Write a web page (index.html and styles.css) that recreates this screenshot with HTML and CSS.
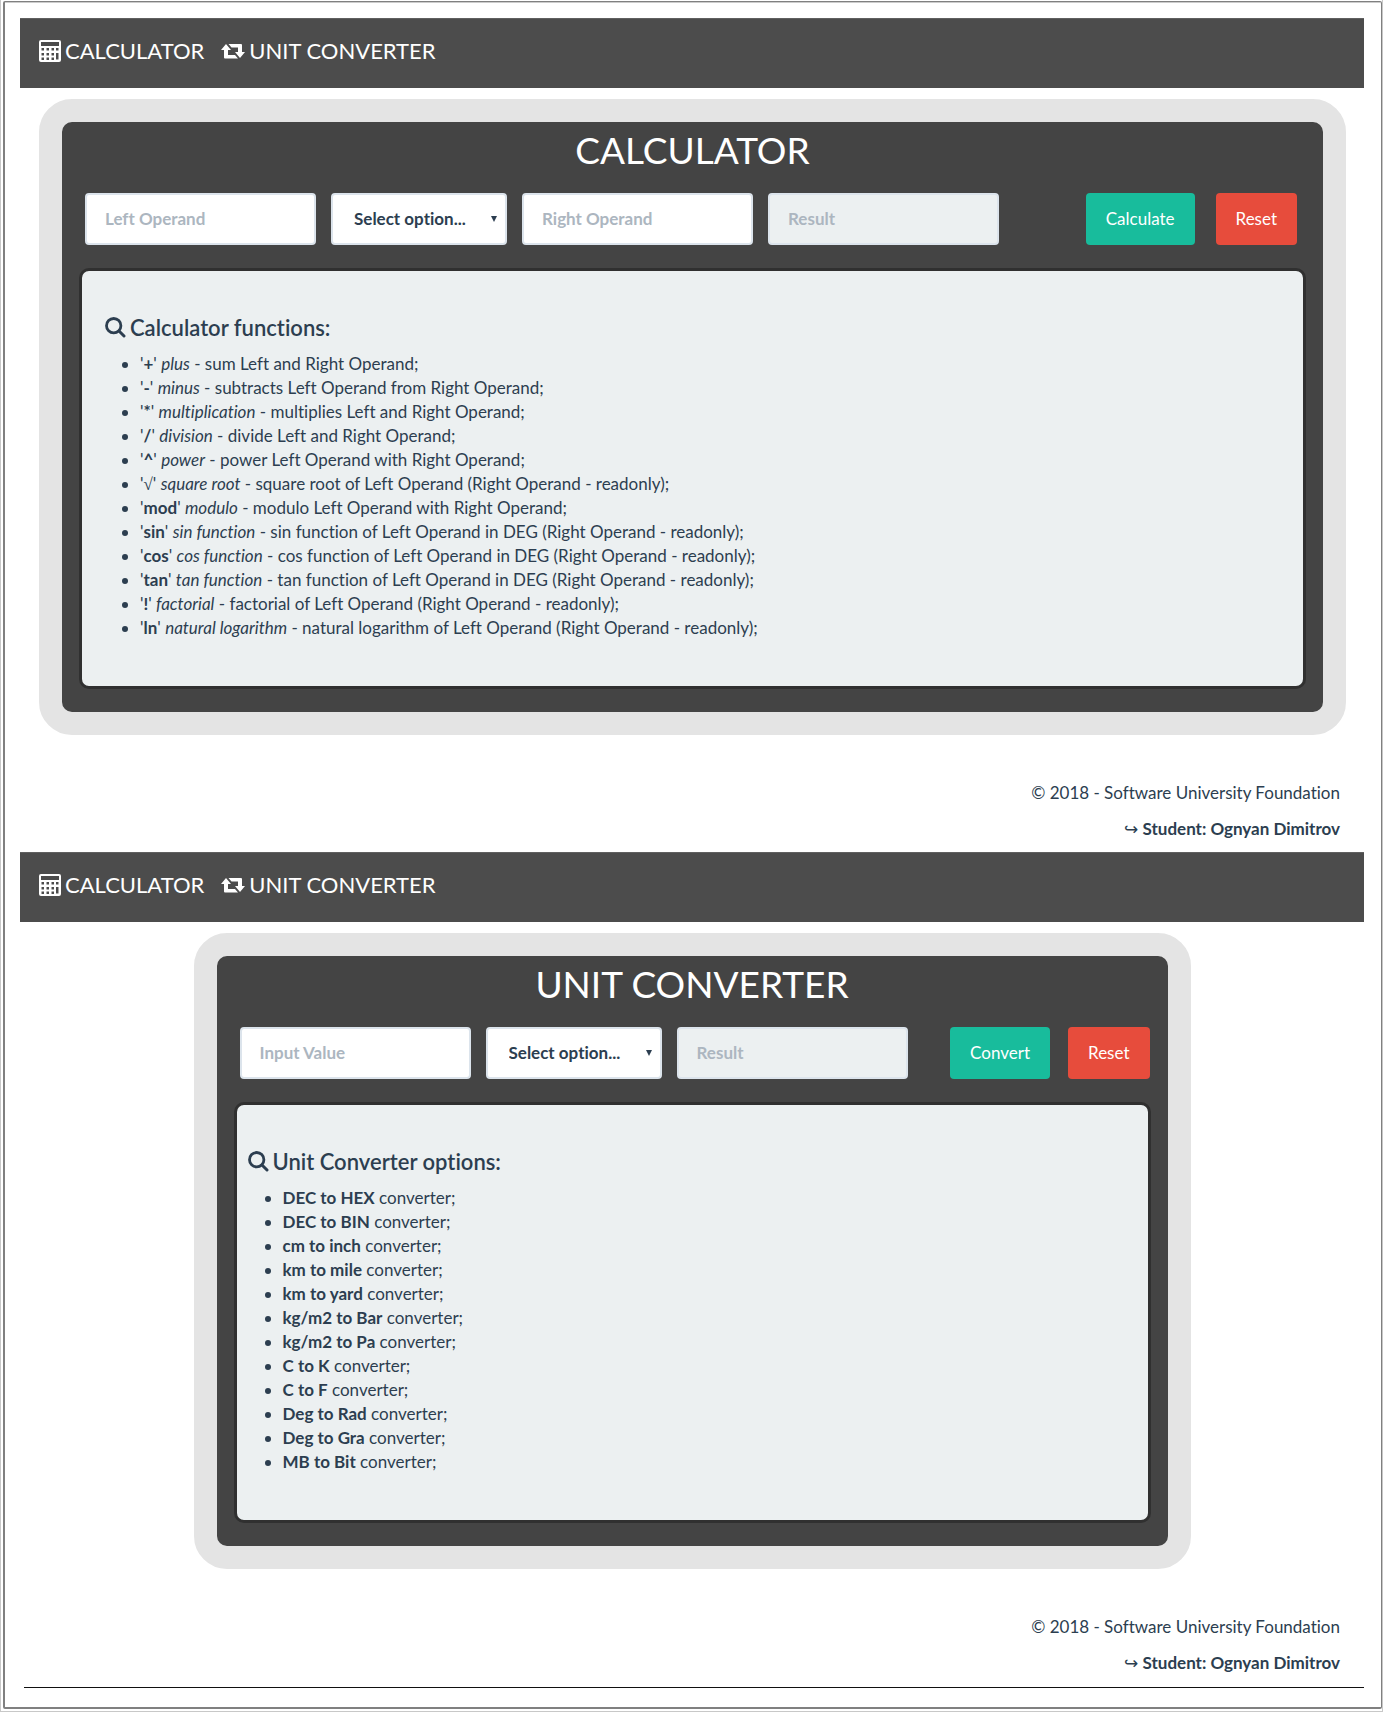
FILE: index.html
```html
<!DOCTYPE html>
<html lang="en">
<head>
<meta charset="utf-8">
<title>Calculator and Unit Converter</title>
<link rel="stylesheet" href="styles.css">
</head>
<body>
<svg class="sprite" aria-hidden="true">
  <symbol id="icon-calculator" viewBox="0 0 22 22">
    <path fill-rule="evenodd" d="M2 0h18a2 2 0 0 1 2 2v18a2 2 0 0 1-2 2H2a2 2 0 0 1-2-2V2a2 2 0 0 1 2-2zM2 2v4h18V2zM2.500 8v2.500h2.500V8zM7.500 8v2.500h2.500V8zM12.500 8v2.500h2.500V8zM17 8v2.500h2.500V8zM2.500 13v2.500h2.500v-2.500zM7.500 13v2.500h2.500v-2.500zM12.500 13v2.500h2.500v-2.500zM17 13v6.500h2.500v-6.500zM2.500 17.500v2.500h2.500v-2.500zM7.500 17.500v2.500h2.500v-2.500zM12.500 17.500v2.500h2.500v-2.500z"/>
  </symbol>
  <symbol id="icon-retweet" viewBox="0 0 24 16">
    <path d="M5 1l5 6H7v5h7l3 3.500H4Q3 15.500 3 14.500V7H0zM7.500 1H20Q21 1 21 2V9h3l-5 6-5-6h3V4.500h-6.500z"/>
  </symbol>
  <symbol id="icon-search" viewBox="0 0 21 21">
    <circle cx="8.700" cy="8.700" r="7.200" fill="none" stroke="currentColor" stroke-width="2.800"/>
    <path d="M14 14l5 5" fill="none" stroke="currentColor" stroke-width="3" stroke-linecap="round"/>
  </symbol>
</svg>
<div class="page">
<div class="frame">
  <section class="screen">
    <nav class="navbar">
      <a href="#calculator"><svg class="icon-calc"><use href="#icon-calculator"/></svg>CALCULATOR</a>
      <a href="#converter"><svg class="icon-retweet"><use href="#icon-retweet"/></svg>UNIT CONVERTER</a>
    </nav>
    <main class="panel" id="calculator">
      <h1>CALCULATOR</h1>
      <form class="controls">
        <input class="field" type="text" placeholder="Left Operand" aria-label="Left Operand">
        <select class="field" aria-label="Operation"><option>Select option...</option></select>
        <input class="field" type="text" placeholder="Right Operand" aria-label="Right Operand">
        <input class="field" type="text" placeholder="Result" aria-label="Result" readonly>
        <div class="actions">
          <button class="btn primary" type="button">Calculate</button>
          <button class="btn danger" type="reset">Reset</button>
        </div>
      </form>
      <div class="help">
        <h2><svg class="icon-search"><use href="#icon-search"/></svg>Calculator functions:</h2>
        <ul>
          <li>'<b>+</b>' <i>plus</i> - sum Left and Right Operand;</li>
          <li>'<b>-</b>' <i>minus</i> - subtracts Left Operand from Right Operand;</li>
          <li>'<b>*</b>' <i>multiplication</i> - multiplies Left and Right Operand;</li>
          <li>'<b>/</b>' <i>division</i> - divide Left and Right Operand;</li>
          <li>'<b>^</b>' <i>power</i> - power Left Operand with Right Operand;</li>
          <li>'<span class="root">√</span>' <i>square root</i> - square root of Left Operand (Right Operand - readonly);</li>
          <li>'<b>mod</b>' <i>modulo</i> - modulo Left Operand with Right Operand;</li>
          <li>'<b>sin</b>' <i>sin function</i> - sin function of Left Operand in DEG (Right Operand - readonly);</li>
          <li>'<b>cos</b>' <i>cos function</i> - cos function of Left Operand in DEG (Right Operand - readonly);</li>
          <li>'<b>tan</b>' <i>tan function</i> - tan function of Left Operand in DEG (Right Operand - readonly);</li>
          <li>'<b>!</b>' <i>factorial</i> - factorial of Left Operand (Right Operand - readonly);</li>
          <li>'<b>ln</b>' <i>natural logarithm</i> - natural logarithm of Left Operand (Right Operand - readonly);</li>
        </ul>
      </div>
    </main>
    <footer class="footer">
      <p>© 2018 - Software University Foundation</p>
      <p><span class="arrow">↪</span> <b>Student: Ognyan Dimitrov</b></p>
    </footer>
  </section>
  <section class="screen">
    <nav class="navbar">
      <a href="#calculator"><svg class="icon-calc"><use href="#icon-calculator"/></svg>CALCULATOR</a>
      <a href="#converter"><svg class="icon-retweet"><use href="#icon-retweet"/></svg>UNIT CONVERTER</a>
    </nav>
    <main class="panel narrow" id="converter">
      <h1>UNIT CONVERTER</h1>
      <form class="controls">
        <input class="field" type="text" placeholder="Input Value" aria-label="Input Value">
        <select class="field" aria-label="Conversion"><option>Select option...</option></select>
        <input class="field" type="text" placeholder="Result" aria-label="Result" readonly>
        <div class="actions">
          <button class="btn primary" type="button">Convert</button>
          <button class="btn danger" type="reset">Reset</button>
        </div>
      </form>
      <div class="help">
        <h2><svg class="icon-search"><use href="#icon-search"/></svg>Unit Converter options:</h2>
        <ul>
          <li><b>DEC to HEX</b> converter;</li>
          <li><b>DEC to BIN</b> converter;</li>
          <li><b>cm to inch</b> converter;</li>
          <li><b>km to mile</b> converter;</li>
          <li><b>km to yard</b> converter;</li>
          <li><b>kg/m2 to Bar</b> converter;</li>
          <li><b>kg/m2 to Pa</b> converter;</li>
          <li><b>C to K</b> converter;</li>
          <li><b>C to F</b> converter;</li>
          <li><b>Deg to Rad</b> converter;</li>
          <li><b>Deg to Gra</b> converter;</li>
          <li><b>MB to Bit</b> converter;</li>
        </ul>
      </div>
    </main>
    <footer class="footer">
      <p>© 2018 - Software University Foundation</p>
      <p><span class="arrow">↪</span> <b>Student: Ognyan Dimitrov</b></p>
    </footer>
  </section>
  <hr class="rule">
</div>
</div>
</body>
</html>
```
FILE: styles.css
```css
* { box-sizing: border-box; }

body {
  margin: 0;
  background: #fff;
  color: #2c3e50;
  font: 17px/24px Lato, sans-serif;
  font-variant-ligatures: none;
}

.sprite { display: none; }
svg { fill: currentColor; flex: none; }

/* Double outline round the whole page: a light outer line, a grey inner one. */
.page {
  padding: 1px 0 2px 2px;
  border: solid #c8c8c8;
  border-width: 0 1px 1px;
}
.frame {
  padding: 16px 17px 19px 15px;
  border: solid #808080;
  border-width: 1px 1px 2px 2px;
  border-radius: 2px;
  box-shadow: inset 0 1px #ccc;
}

.navbar {
  display: flex;
  gap: 17px;
  height: 70px;
  padding: 20px 19px;
  background: #4c4c4c;
  border-top: 1px solid #606060;
}
.navbar a {
  display: flex;
  align-items: center;
  height: 24px;
  color: #fff;
  font-size: 22px;
  text-decoration: none;
}
.icon-calc { width: 22px; height: 22px; margin-right: 4px; }
.icon-retweet { width: 24px; height: 16px; margin-right: 4px; }

.panel {
  margin: 11px 18px 0 19px;
  padding: 0 17px 23px;
  border: 23px solid #e4e4e4;
  border-radius: 33px;
  background: #444;
}
.narrow { max-width: 997px; margin-left: auto; margin-right: auto; }

h1 {
  margin: 0;
  padding: 8px 0 23px;
  color: #fff;
  font-size: 37px;
  font-weight: 400;
  line-height: 40px;
  text-align: center;
}

.controls {
  display: flex;
  gap: 15px;
  padding: 0 9px 0 6px;
  margin-bottom: 23px;
}
.field {
  width: 231px;
  height: 52px;
  padding: 0 18px 2px;
  border: 2px solid #dce4ec;
  border-radius: 4px;
  background: #fff;
  color: #2c3e50;
  font: bold 17px/24px Lato, sans-serif;
  font-variant-ligatures: none;
}
.field::placeholder { color: #acb6c0; opacity: 1; }
.field:read-only:not(select) { background: #ecf0f1; }
select.field {
  width: 176px;
  padding: 0 21px;
  appearance: none;
  background: #fff url("data:image/svg+xml,%3Csvg xmlns='http://www.w3.org/2000/svg' width='6' height='6'%3E%3Cpath d='M0 0h6L3 6z' fill='%232c3e50'/%3E%3C/svg%3E") no-repeat right 8px center;
}

.actions { display: flex; gap: 21px; margin-left: auto; }
.btn {
  height: 52px;
  padding: 0 20px;
  border: 0;
  border-radius: 4px;
  color: #fff;
  font: 17px/24px Lato, sans-serif;
}
.primary { background: #18bc9c; }
.danger { background: #e74c3c; }
.narrow .controls { padding-right: 1px; }
.narrow .actions { gap: 18px; }

.help {
  padding: 43px 23px 46px;
  border: 3px solid #303030;
  border-radius: 10px;
  background: #ecf0f1;
}
.narrow .help { padding-left: 11px; }
h2 {
  display: flex;
  align-items: center;
  margin: 0 0 11px;
  font-size: 22px;
  font-weight: 600;
  line-height: 27px;
}
.icon-search { width: 21px; height: 21px; margin-right: 4px; }
ul { margin: 0; padding-left: 35px; }
.root { font-family: "Liberation Serif", serif; line-height: 1; }

.footer { padding: 46px 24px 11px; text-align: right; }
.footer p { margin: 0; }
.footer p + p { margin-top: 12px; }
.arrow { font-family: "DejaVu Sans", sans-serif; font-size: 17px; line-height: 1; }

.rule {
  height: 1px;
  margin: 1px 0 0 4px;
  border: 0;
  background: #111;
}
```
